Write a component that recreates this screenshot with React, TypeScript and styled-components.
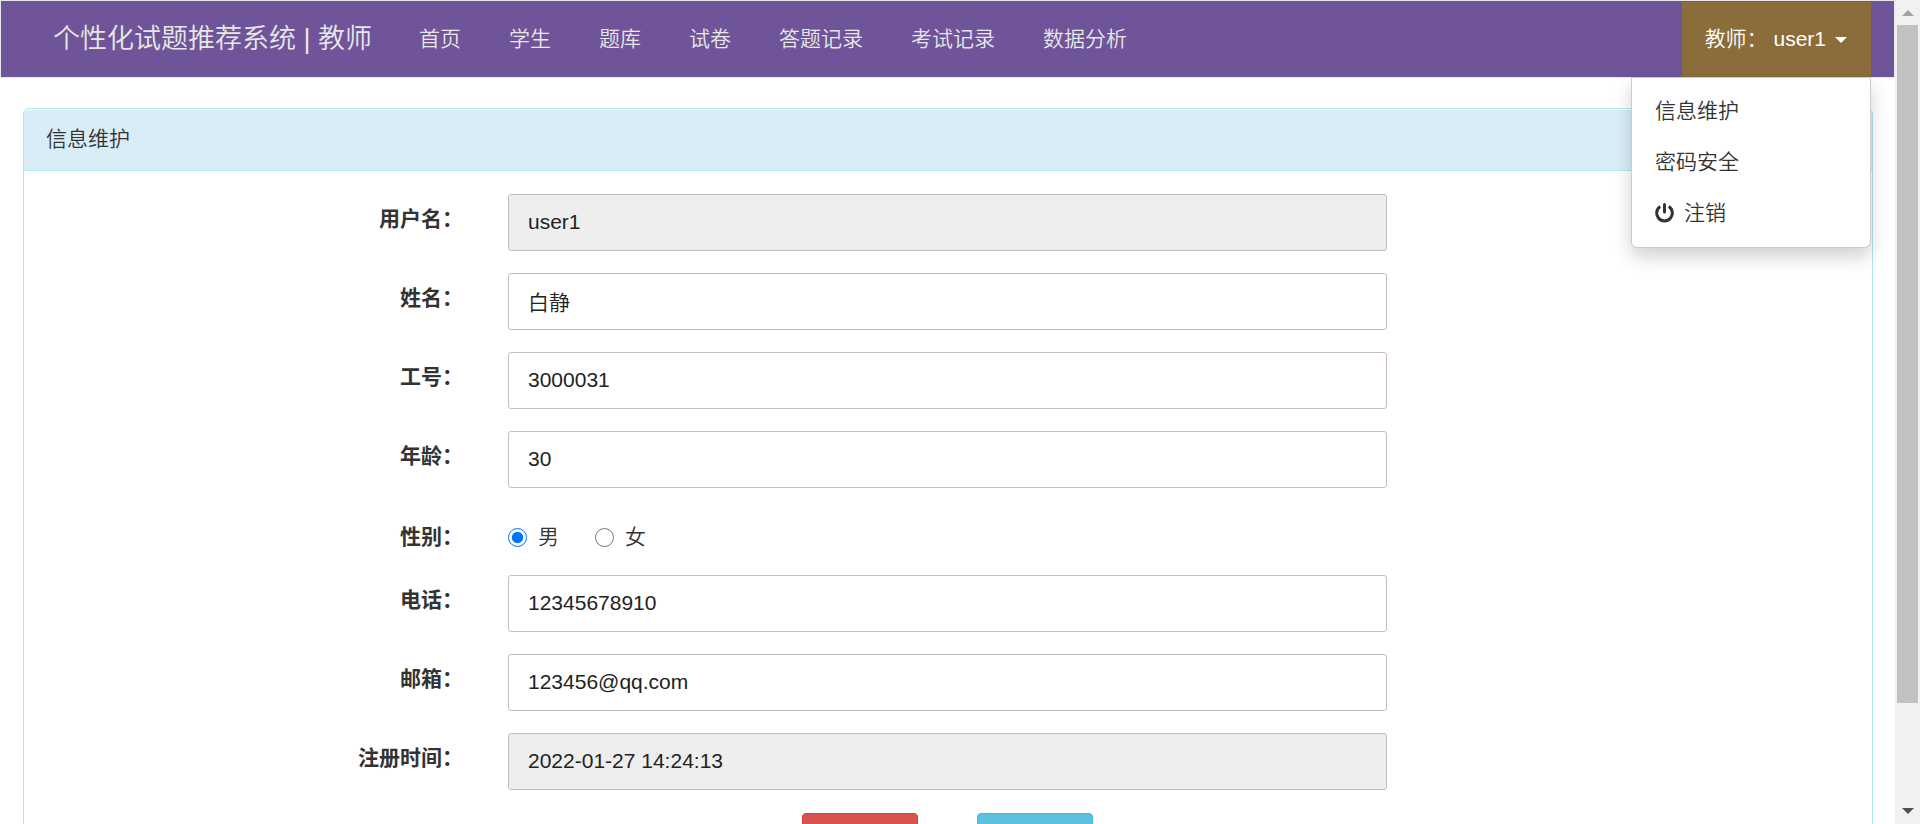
import React from "react";
import styled, { createGlobalStyle } from "styled-components";

const GlobalStyle = createGlobalStyle`
  *, *::before, *::after { box-sizing: border-box; }
  body {
    margin: 0;
    background: #fff;
    color: #333;
    font: 350 21px/30px "Liberation Sans", "Noto Sans CJK SC", sans-serif;
  }
  input, button { font: inherit; }
`;

const Shell = styled.div`
  display: flex;
  height: 100vh;
`;

const Page = styled.div`
  flex: 1;
  min-width: 0;
  overflow-y: auto;
  scrollbar-width: none;
`;

const Navbar = styled.nav`
  display: flex;
  align-items: stretch;
  height: 78px;
  padding: 0 23px 0 29px;
  border: 1px solid #e7e7e7;
  background: #6f5499;
`;

const Brand = styled.a`
  display: flex;
  align-items: center;
  padding: 0 23px;
  font-size: 27px;
  color: #e7e7e7;
  text-decoration: none;
  white-space: pre;
`;

const NavList = styled.ul`
  display: flex;
  flex: 1;
  margin: 0;
  padding: 0;
  list-style: none;
`;

const NavLink = styled.a`
  display: flex;
  align-items: center;
  height: 100%;
  padding: 0 24px;
  color: #e7e7e7;
  text-decoration: none;
  white-space: nowrap;
`;

const UserBox = styled.div`
  position: relative;
  padding-top: 1px;
`;

const UserToggle = styled.button`
  display: flex;
  align-items: center;
  height: 100%;
  padding: 0 24px 2px 23px;
  border: 0;
  background: #8a6d3b;
  color: #fff;
  white-space: pre;
`;

const Caret = styled.span`
  margin: 2px 0 0 9px;
  border: 6px solid transparent;
  border-top-color: #fff;
  border-bottom: 0;
`;

const Menu = styled.ul`
  position: absolute;
  top: 100%;
  right: 0;
  z-index: 1;
  width: 240px;
  margin: 0;
  padding: 7px 0 9px;
  list-style: none;
  background: #fff;
  border: 1px solid rgba(0, 0, 0, 0.2);
  border-radius: 0 0 6px 6px;
  box-shadow: 0 9px 18px rgba(0, 0, 0, 0.18);
`;

const MenuLink = styled.a`
  display: flex;
  align-items: center;
  gap: 10px;
  height: 51px;
  padding: 0 23px;
  color: #333;
  text-decoration: none;
`;

const Panel = styled.section`
  margin: 30px 22px 30px 23px;
  padding-top: 1px;
  border: 1px solid #b2e8f0;
  border-radius: 6px;
`;

const PanelHeading = styled.h1`
  margin: 0;
  padding: 14px 22px 16px;
  font-size: 21px;
  font-weight: inherit;
  line-height: 30px;
  background: #d9edf7;
  border-bottom: 1px solid #b2e8f0;
  border-radius: 4px 4px 0 0;
`;

const Form = styled.form`
  display: flex;
  flex-direction: column;
  gap: 22px;
  padding: 23px 0;
`;

const Row = styled.div`
  display: grid;
  grid-template-columns: 1fr 2fr 1fr;
`;

const Label = styled.label<{ $choice?: boolean }>`
  padding: ${(p) => (p.$choice ? "12px" : "10px")} 23px 0;
  text-align: right;
  font-weight: 700;
`;

const Field = styled.div`
  padding: 0 23px 0 22px;
`;

const Input = styled.input`
  display: block;
  width: 100%;
  height: 57px;
  padding: 0 19px 1px;
  border: 1px solid #c9bcc1;
  border-radius: 3px;
  background: #fff;
  color: #222;
  &:read-only { background: #eee; }
`;

const Choices = styled.div`
  display: flex;
  gap: 36px;
  padding: 12px 22px 1px;
`;

const Choice = styled.label`
  display: flex;
  align-items: center;
  gap: 11px;
`;

const Radio = styled.input`
  width: 19px;
  height: 19px;
  margin: 0;
`;

const Actions = styled.div`
  display: flex;
  justify-content: center;
  gap: 59px;
  padding: 1px 2px 0 0;
`;

const ActionButton = styled.button<{ $tone: "danger" | "info" }>`
  width: 116px;
  height: 51px;
  border: 1px solid ${(p) => (p.$tone === "danger" ? "#d43f3a" : "#46b8da")};
  border-radius: 4px;
  background: ${(p) => (p.$tone === "danger" ? "#d9534f" : "#5bc0de")};
`;

const ScrollTrack = styled.div`
  display: flex;
  flex-direction: column;
  justify-content: space-between;
  width: 25px;
  padding: 10px 2px;
  background: #f1f1f1;
`;

const ScrollArrow = styled.span<{ $down?: boolean }>`
  align-self: center;
  border: 6px solid transparent;
  ${(p) =>
    p.$down
      ? "border-top-color: #505050; border-bottom: 0;"
      : "border-bottom-color: #a3a3a3; border-top: 0;"}
`;

const ScrollLane = styled.div`
  flex: 1;
  margin: 9px 0;
`;

const ScrollThumb = styled.div`
  height: 87.6%;
  background: #c1c1c1;
`;

const navItems = ["首页", "学生", "题库", "试卷", "答题记录", "考试记录", "数据分析"];

type FieldData = { id: string; label: string; value: string; readOnly?: boolean };

const profile: FieldData[] = [
  { id: "username", label: "用户名：", value: "user1", readOnly: true },
  { id: "name", label: "姓名：", value: "白静" },
  { id: "number", label: "工号：", value: "3000031" },
  { id: "age", label: "年龄：", value: "30" },
];

const contact: FieldData[] = [
  { id: "phone", label: "电话：", value: "12345678910" },
  { id: "email", label: "邮箱：", value: "123456@qq.com" },
  { id: "created", label: "注册时间：", value: "2022-01-27 14:24:13", readOnly: true },
];

function TextRow({ id, label, value, readOnly }: FieldData) {
  return (
    <Row>
      <Label htmlFor={id}>{label}</Label>
      <Field>
        <Input id={id} type="text" defaultValue={value} readOnly={readOnly} />
      </Field>
    </Row>
  );
}

function PowerIcon() {
  return (
    <svg width="19" height="20" viewBox="0 0 19 20" fill="none" stroke="#333" strokeWidth="3" aria-hidden="true">
      <path d="M9.5 1.5V9" strokeLinecap="round" />
      <path d="M5.2 3.6A7.8 7.8 0 1 0 13.8 3.6" />
    </svg>
  );
}

export default function App() {
  return (
    <>
      <GlobalStyle />
      <Shell>
        <Page>
          <Navbar>
            <Brand href="#">个性化试题推荐系统 | 教师</Brand>
            <NavList>
              {navItems.map((item) => (
                <li key={item}>
                  <NavLink href="#">{item}</NavLink>
                </li>
              ))}
            </NavList>
            <UserBox>
              <UserToggle type="button" aria-expanded="true">
                {"教师： user1"}
                <Caret />
              </UserToggle>
              <Menu>
                <li><MenuLink href="#">信息维护</MenuLink></li>
                <li><MenuLink href="#">密码安全</MenuLink></li>
                <li><MenuLink href="#"><PowerIcon />注销</MenuLink></li>
              </Menu>
            </UserBox>
          </Navbar>
          <Panel>
            <PanelHeading>信息维护</PanelHeading>
            <Form>
              {profile.map((f) => <TextRow key={f.id} {...f} />)}
              <Row role="radiogroup" aria-labelledby="gender">
                <Label as="span" id="gender" $choice>性别：</Label>
                <Choices>
                  <Choice><Radio type="radio" name="gender" defaultChecked />男</Choice>
                  <Choice><Radio type="radio" name="gender" />女</Choice>
                </Choices>
              </Row>
              {contact.map((f) => <TextRow key={f.id} {...f} />)}
              <Actions>
                <ActionButton type="reset" $tone="danger" />
                <ActionButton type="submit" $tone="info" />
              </Actions>
            </Form>
          </Panel>
        </Page>
        <ScrollTrack aria-hidden="true">
          <ScrollArrow />
          <ScrollLane><ScrollThumb /></ScrollLane>
          <ScrollArrow $down />
        </ScrollTrack>
      </Shell>
    </>
  );
}
